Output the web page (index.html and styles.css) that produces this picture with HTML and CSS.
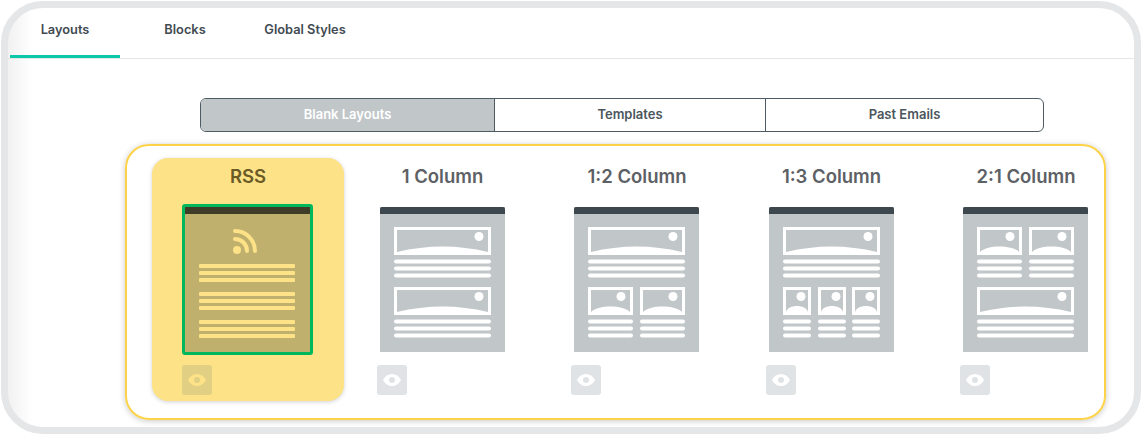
FILE: index.html
```html
<!DOCTYPE html>
<html lang="en">
<head>
    <meta charset="UTF-8">
    <meta name="viewport" content="width=device-width, initial-scale=1.0">
    <title>Choose a layout</title>
    <link rel="stylesheet" href="styles.css">
</head>
<body>

    <svg class="svg-defs">
        <defs>
            <g id="block-wide">
                <rect x="1.5" y="1.5" width="94" height="25" fill="none" stroke="#fff" stroke-width="3"/>
                <circle cx="85" cy="9.5" r="4.500" fill="#fff"/>
                <path d="M3 25Q48.500 14 94 25Z" fill="#fff"/>
                <rect y="32.500" width="97" height="4" rx="2" fill="#fff"/>
                <rect y="39.500" width="97" height="4" rx="2" fill="#fff"/>
                <rect y="46.500" width="97" height="4" rx="2" fill="#fff"/>
            </g>
            <g id="block-half">
                <rect x="1.5" y="1.5" width="42" height="25" fill="none" stroke="#fff" stroke-width="3"/>
                <circle cx="33" cy="9.5" r="4.500" fill="#fff"/>
                <path d="M3 25C9 17.500 36 17.500 42 25Z" fill="#fff"/>
                <rect y="32.500" width="45" height="4" rx="2" fill="#fff"/>
                <rect y="39.500" width="45" height="4" rx="2" fill="#fff"/>
                <rect y="46.500" width="45" height="4" rx="2" fill="#fff"/>
            </g>
            <g id="block-third">
                <rect x="1.5" y="1.5" width="25" height="25" fill="none" stroke="#fff" stroke-width="3"/>
                <circle cx="18" cy="9.5" r="4.500" fill="#fff"/>
                <path d="M3 25C5 17 23 17 25 25Z" fill="#fff"/>
                <rect y="32.500" width="28" height="4" rx="2" fill="#fff"/>
                <rect y="39.500" width="28" height="4" rx="2" fill="#fff"/>
                <rect y="46.500" width="28" height="4" rx="2" fill="#fff"/>
            </g>
            <path id="thumb-bar" d="M0 7V2a2 2 0 0 1 2-2H123a2 2 0 0 1 2 2V7Z"/>
            <g id="eye">
                <path d="M0 6C4-2 14-2 18 6C14 14 4 14 0 6Z" fill="currentColor"/>
                <circle cx="9" cy="6" r="3"/>
            </g>
            <g id="rss-lines">
                <rect width="96" height="4" rx="1" fill="#fde287"/>
                <rect y="7" width="96" height="4" rx="1" fill="#fde287"/>
                <rect y="14" width="96" height="4" rx="1" fill="#fde287"/>
            </g>
        </defs>
    </svg>

    <div class="frame">
        <div class="tabs">
            <div class="tab active">Layouts</div>
            <div class="tab">Blocks</div>
            <div class="tab">Global Styles</div>
        </div>

        <div class="switcher">
            <div class="seg seg-blank">Blank Layouts</div>
            <div class="seg seg-templates">Templates</div>
            <div class="seg seg-past">Past Emails</div>
        </div>

        <div class="panel">
            <div class="card selected">
                <div class="card-title">RSS</div>
                <div class="thumb">
                    <svg width="125" height="145" viewBox="0 0 125 145">
                        <rect width="125" height="145" fill="#bfb06e"/>
                        <rect width="125" height="7" fill="#3f3c28"/>
                        <circle cx="52" cy="43" r="4" fill="#fde287"/>
                        <path d="M50 24A20 20 0 0 1 70 44M50 32A12 12 0 0 1 62 44" fill="none" stroke="#fde287" stroke-width="4" stroke-linecap="round"/>
                        <use href="#rss-lines" x="14" y="57"/>
                        <use href="#rss-lines" x="14" y="85"/>
                        <use href="#rss-lines" x="14" y="113"/>
                    </svg>
                </div>
                <div class="eye-btn"><svg width="18" height="12" viewBox="0 0 18 12"><use href="#eye"/></svg></div>
            </div>

            <div class="card">
                <div class="card-title">1 Column</div>
                <div class="thumb">
                    <svg width="125" height="145" viewBox="0 0 125 145">
                        <rect width="125" height="145" fill="#c1c6c9"/>
                        <use href="#thumb-bar" fill="#3d474e"/>
                        <use href="#block-wide" x="14" y="20"/>
                        <use href="#block-wide" x="14" y="80"/>
                    </svg>
                </div>
                <div class="eye-btn"><svg width="18" height="12" viewBox="0 0 18 12"><use href="#eye"/></svg></div>
            </div>

            <div class="card">
                <div class="card-title">1:2 Column</div>
                <div class="thumb">
                    <svg width="125" height="145" viewBox="0 0 125 145">
                        <rect width="125" height="145" fill="#c1c6c9"/>
                        <use href="#thumb-bar" fill="#3d474e"/>
                        <use href="#block-wide" x="14" y="20"/>
                        <use href="#block-half" x="14" y="80"/>
                        <use href="#block-half" x="66" y="80"/>
                    </svg>
                </div>
                <div class="eye-btn"><svg width="18" height="12" viewBox="0 0 18 12"><use href="#eye"/></svg></div>
            </div>

            <div class="card">
                <div class="card-title">1:3 Column</div>
                <div class="thumb">
                    <svg width="125" height="145" viewBox="0 0 125 145">
                        <rect width="125" height="145" fill="#c1c6c9"/>
                        <use href="#thumb-bar" fill="#3d474e"/>
                        <use href="#block-wide" x="14" y="20"/>
                        <use href="#block-third" x="14" y="80"/>
                        <use href="#block-third" x="49" y="80"/>
                        <use href="#block-third" x="83" y="80"/>
                    </svg>
                </div>
                <div class="eye-btn"><svg width="18" height="12" viewBox="0 0 18 12"><use href="#eye"/></svg></div>
            </div>

            <div class="card">
                <div class="card-title">2:1 Column</div>
                <div class="thumb">
                    <svg width="125" height="145" viewBox="0 0 125 145">
                        <rect width="125" height="145" fill="#c1c6c9"/>
                        <use href="#thumb-bar" fill="#3d474e"/>
                        <use href="#block-half" x="14" y="20"/>
                        <use href="#block-half" x="66" y="20"/>
                        <use href="#block-wide" x="14" y="80"/>
                    </svg>
                </div>
                <div class="eye-btn"><svg width="18" height="12" viewBox="0 0 18 12"><use href="#eye"/></svg></div>
            </div>
        </div>
    </div>

</body>
</html>
```

FILE: styles.css
```css
body {
    font-family: Inter, "Open Sans", sans-serif;
    font-weight: 600;
    margin: 0;
    padding: 0;
    background: white;
    overflow: hidden;
}

.svg-defs {
    display: none;
}

.frame {
    box-sizing: border-box;
    width: 1140px;
    height: 433px;
    margin: 1px 1px 0;
    border: 7px solid #e5e6e8;
    border-radius: 42px;
    background: linear-gradient(to right, #f1f1f2, white 24px);
    overflow: hidden;
}

.tabs {
    display: flex;
    gap: 10px;
    height: 50px;
    padding-left: 2px;
    border-bottom: 1px solid #e5e6e8;
}

.tab {
    box-sizing: border-box;
    width: 110px;
    height: 50px;
    padding-top: 13px;
    border-bottom: 3px solid transparent;
    color: #414b52;
    font-size: 12.800px;
    line-height: 18px;
    text-align: center;
}

.tab.active {
    border-bottom-color: #0cc8a8;
}

.switcher {
    display: flex;
    box-sizing: border-box;
    width: 844px;
    height: 34px;
    margin: 39px 0 0 192px;
    border: 1px solid #4f5b63;
    border-radius: 6px;
    overflow: hidden;
}

.seg {
    box-sizing: border-box;
    color: #4c565d;
    font-size: 13px;
    line-height: 31px;
    text-align: center;
}

.seg-blank {
    width: 294px;
    border-right: 1px solid #4f5b63;
    background: #c1c6c9;
    color: white;
}

.seg-templates {
    width: 271px;
    border-right: 1px solid #4f5b63;
}

.seg-past {
    flex: 1;
}

.panel {
    display: flex;
    gap: 2.5px;
    box-sizing: border-box;
    width: 981px;
    height: 276px;
    margin: 12px 0 0 117px;
    padding: 12px 0 0 25px;
    border: 2px solid #fcd249;
    border-radius: 24px;
    box-shadow: 0 1px 6px rgba(0, 0, 0, 0.22);
    overflow: hidden;
}

.card {
    flex: 0 0 192px;
    box-sizing: border-box;
    height: 243px;
    padding: 6px 0 0 30px;
    border-radius: 16px;
}

.card.selected {
    background: #fde287;
    box-shadow: 0 1px 4px rgba(0, 0, 0, 0.18);
}

.card-title {
    margin-left: -30px;
    color: #5d6165;
    font-size: 18.500px;
    line-height: 24px;
    text-align: center;
}

.selected .card-title {
    color: #6b5a26;
}

.thumb {
    box-sizing: border-box;
    width: 131px;
    height: 151px;
    margin-top: 16px;
    border: 3px solid transparent;
    border-radius: 3px;
}

.selected .thumb {
    border-color: #00b85c;
}

.thumb svg {
    display: block;
}

.eye-btn {
    display: flex;
    align-items: center;
    justify-content: center;
    width: 30px;
    height: 30px;
    margin-top: 10px;
    border-radius: 3px;
    background: #e0e3e5;
    color: white;
    fill: #e0e3e5;
}

.selected .eye-btn {
    background: #e1cf83;
    color: #fde287;
    fill: #e1cf83;
}
```
